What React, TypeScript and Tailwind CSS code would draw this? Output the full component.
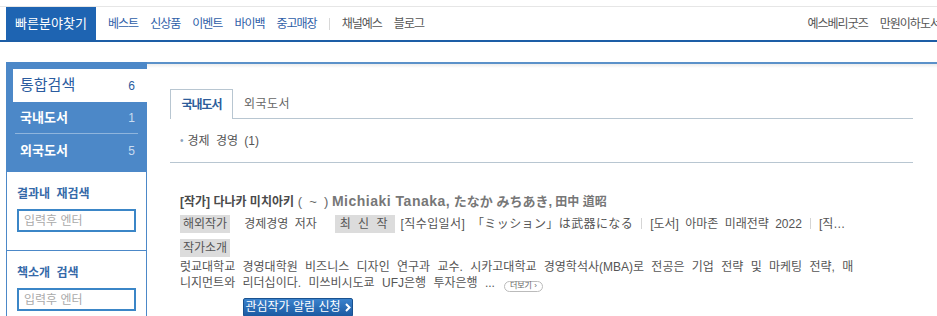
import React from "react";

const FONT = { fontFamily: '"Liberation Sans", "Noto Sans CJK KR", sans-serif' };

function Sep() {
  return <span className="mx-[8px] inline-block h-[11px] w-px bg-[#d5d5d5] align-[-1px]" />;
}

function Chevron() {
  return (
    <svg width="6" height="9" viewBox="0 0 6 9" className="ml-[4px]">
      <path d="M1 1 L4.5 4.5 L1 8" fill="none" stroke="white" strokeWidth="2" />
    </svg>
  );
}

export default function App() {
  return (
    <div className="w-[937px] h-[316px] overflow-hidden bg-white text-[12px] text-[#555]" style={FONT}>
      {/* header */}
      <div className="pt-[6px]">
        <div className="flex h-[36px] items-stretch overflow-hidden border-t border-[#e6e6e6] border-b-2 border-b-[#1d5ea6] pl-[6px]">
          <div className="flex w-[90px] shrink-0 items-center justify-center bg-[#1e64b2] text-[13px] text-white">
            빠른분야찾기
          </div>
          <nav className="ml-[12px] flex items-center text-[12px] tracking-[-1px] text-[#2e5ea8]">
            <span>베스트</span>
            <span className="ml-[12px]">신상품</span>
            <span className="ml-[12px]">이벤트</span>
            <span className="ml-[12px]">바이백</span>
            <span className="ml-[12px]">중고매장</span>
            <span className="ml-[12px] h-[12px] w-px bg-[#d8d8d8]" />
            <span className="ml-[12px] text-[#555]">채널예스</span>
            <span className="ml-[12px] text-[#555]">블로그</span>
          </nav>
          <div className="ml-auto mr-[-3px] flex shrink-0 items-center text-[12px] tracking-[-1px] text-[#555]">
            <span>예스베리굿즈</span>
            <span className="ml-[12px]">만원이하도서</span>
          </div>
        </div>
      </div>

      {/* main */}
      <div className="mt-[20px] flex">
        {/* sidebar */}
        <aside className="ml-[6px] w-[141px] shrink-0">
          <div className="bg-[#4c88c8] pb-[5px] pt-[7px]">
            <div className="ml-[7px] flex h-[33px] items-center justify-between bg-white pl-[7px] pr-[12px]">
              <span className="text-[15px] text-[#2b5c9f]">통합검색</span>
              <span className="text-[12px] text-[#2b5c9f]">6</span>
            </div>
            <div className="flex h-[31px] items-center justify-between pl-[14px] pr-[12px]">
              <span className="text-[13px] font-bold text-white">국내도서</span>
              <span className="text-[12px] text-[#c9dcf0]">1</span>
            </div>
            <div className="mx-[9px] h-px bg-[#8fb5dd]" />
            <div className="flex h-[33px] items-center justify-between pl-[14px] pr-[12px]">
              <span className="text-[13px] font-bold text-white">외국도서</span>
              <span className="text-[12px] text-[#c9dcf0]">5</span>
            </div>
          </div>
          <div className="border-x border-[#4c88c8]">
            <div className="border-b border-[#4c88c8] pb-[18px] pl-[10px] pt-[14px]">
              <div className="h-[16px] text-[12px] font-bold leading-[16px] text-[#3569a8] [word-spacing:3px]">결과내 재검색</div>
              <input
                className="mt-[7px] block h-[23px] w-[119px] border-2 border-[#3b86c7] px-[5px] text-[12px] text-[#555] outline-none placeholder:text-[#aaa]"
                placeholder="입력후 엔터"
                style={FONT}
              />
            </div>
            <div className="pb-[18px] pl-[10px] pt-[14px]">
              <div className="h-[16px] text-[12px] font-bold leading-[16px] text-[#3569a8] [word-spacing:3px]">책소개 검색</div>
              <input
                className="mt-[7px] block h-[23px] w-[119px] border-2 border-[#3b86c7] px-[5px] text-[12px] text-[#555] outline-none placeholder:text-[#aaa]"
                placeholder="입력후 엔터"
                style={FONT}
              />
            </div>
          </div>
        </aside>

        {/* content */}
        <main className="min-w-0 flex-1 border-t-2 border-[#5b91c9]">
          <div className="h-[4px] bg-gradient-to-b from-[#ececec] to-white" />
          <div className="pl-[23px] pr-[24px] pt-[21px]">
            {/* tabs */}
            <div className="flex h-[30px] items-end border-b border-[#b8c6d1]">
              <div className="-mb-px flex h-[30px] w-[63px] items-center justify-center border border-b-0 border-[#b8c6d1] bg-white text-[12px] font-bold tracking-[-1px] text-[#2d5d9b]">
                국내도서
              </div>
              <div className="flex h-[29px] items-center pl-[11px] text-[12px] tracking-[0.5px] text-[#666]">외국도서</div>
            </div>
            <div className="flex h-[44px] items-center border-b border-[#b8c6d1] pl-[10px] text-[12px] text-[#555] [word-spacing:3px]">
              <span className="mr-[4px] text-[10px] text-[#8aa3bd]">•</span>
              <span>경제 경영 (1)</span>
            </div>

            {/* author */}
            <div className="pl-[10px] pt-[30px]">
              <div className="flex h-[16px] items-baseline whitespace-pre leading-[16px]">
                <span className="text-[12px] font-bold text-[#4a4a4a]">[작가] 다나카 미치아키</span>
                <span className="text-[13px] text-[#666]"> (  ~  ) </span>
                <span className="text-[14px] font-bold tracking-[0.5px] text-[#777]">Michiaki Tanaka,</span>
                <span className="text-[13px] font-bold text-[#777]"> たなか みちあき,</span>
                <span className="text-[12px] font-bold text-[#777]"> 田中 道昭</span>
              </div>
              <div className="mt-[6px] flex h-[18px] items-center whitespace-nowrap">
                <span className="flex h-[18px] items-center bg-[#dcdcdc] px-[3px] text-[#555]">해외작가</span>
                <span className="ml-[14px] [word-spacing:3px]">경제경영 저자</span>
                <span className="ml-[18px] flex h-[18px] items-center bg-[#dcdcdc] px-[5px] tracking-[2px] text-[#555]">최 신 작</span>
                <span className="ml-[6px] [word-spacing:3px]">
                  <span className="tracking-[0.4px]">[직수입일서] 「ミッション」は武器になる</span>
                  <Sep />
                  [도서] 아마존 미래전략 2022
                  <Sep />
                  [직…
                </span>
              </div>
              <div className="mt-[6px] flex">
                <span className="flex h-[18px] items-center bg-[#dcdcdc] px-[3px] text-[#555]">작가소개</span>
              </div>
              <div className="mt-[2px] whitespace-nowrap text-[12px] leading-[16px] text-[#555] [word-spacing:4px]">
                럿교대학교 경영대학원 비즈니스 디자인 연구과 교수. 시카고대학교 경영학석사(MBA)로 전공은 기업 전략 및 마케팅 전략, 매
                <br />
                니지먼트와 리더십이다. 미쓰비시도쿄 UFJ은행 투자은행 ...
                <span className="ml-[9px] inline-flex h-[11px] items-center rounded-full border border-[#bbb] px-[5px] align-[-1px] text-[8px] leading-none text-[#666] [word-spacing:0px]">
                  더보기 ›
                </span>
              </div>
              <div className="ml-[63px] mt-[6px]">
                <button
                  className="flex h-[19px] w-[110px] items-center justify-center rounded-[2px] border border-[#1a528f] bg-gradient-to-b from-[#3a82cc] to-[#1b5aa2] text-[12px] text-white"
                  style={FONT}
                >
                  관심작가 알림 신청
                  <Chevron />
                </button>
              </div>
            </div>
          </div>
        </main>
      </div>
    </div>
  );
}
